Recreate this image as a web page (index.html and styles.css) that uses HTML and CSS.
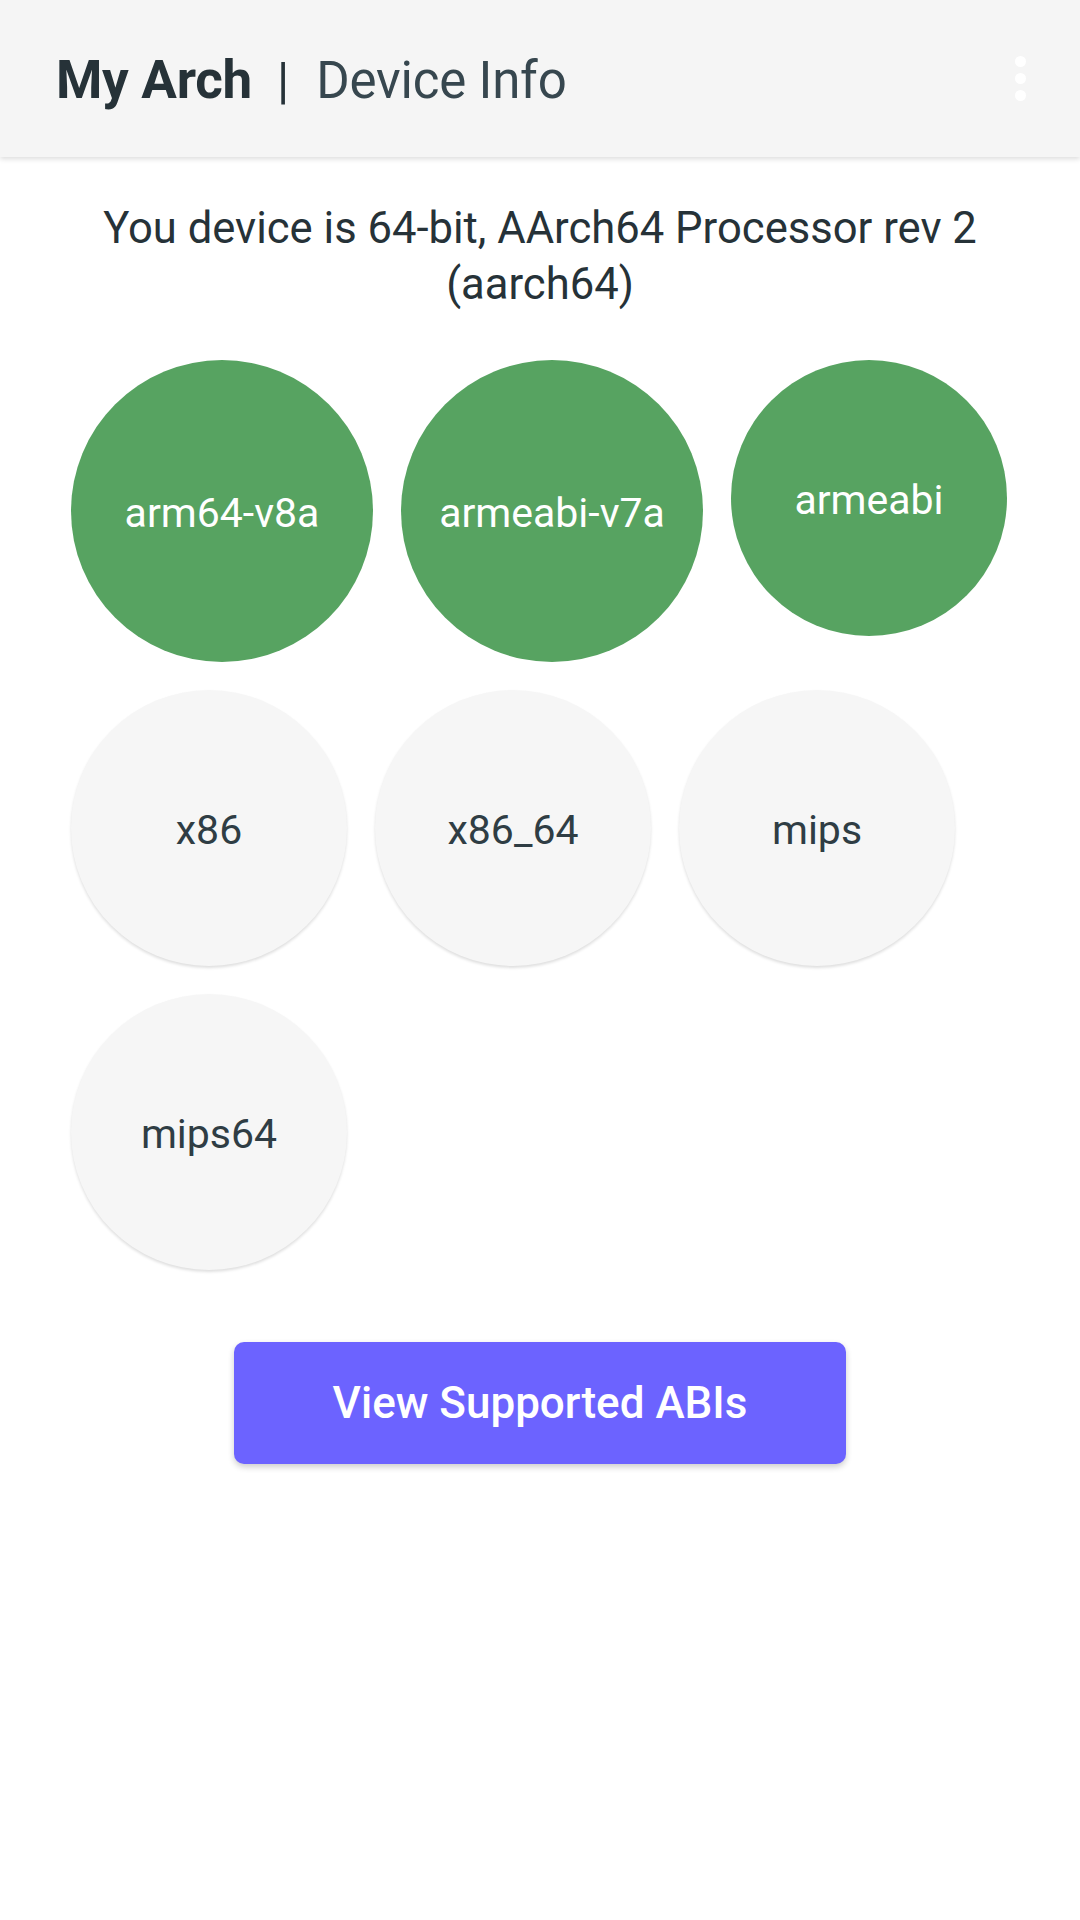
FILE: index.html
```html
<!DOCTYPE html>
<html lang="en">
<head>
<meta charset="utf-8">
<title>My Arch | Device Info</title>
<link rel="stylesheet" href="styles.css">
</head>
<body>
<header class="appbar">
  <div class="title">
    <span class="brand">My Arch</span>
    <span class="sep">|</span>
    <span class="page">Device Info</span>
  </div>
  <div class="menu" aria-label="More options">
    <span class="dot"></span><span class="dot"></span><span class="dot"></span>
  </div>
</header>
<main class="content">
  <p class="info">You device is 64-bit, AArch64 Processor rev 2<br>(aarch64)</p>
  <div class="abis">
    <div class="abi on big">arm64-v8a</div>
    <div class="abi on big">armeabi-v7a</div>
    <div class="abi on">armeabi</div>
    <div class="abi off">x86</div>
    <div class="abi off">x86_64</div>
    <div class="abi off">mips</div>
    <div class="abi off">mips64</div>
  </div>
  <div class="actions">
    <button class="btn">View Supported ABIs</button>
  </div>
</main>
</body>
</html>
```
FILE: styles.css
```css
* { box-sizing: border-box; }
html, body { margin: 0; padding: 0; }
body {
  width: 1080px;
  height: 1920px;
  background: #ffffff;
  font-family: Roboto, "Noto Sans", sans-serif;
  color: #263238;
  overflow: hidden;
}
.appbar {
  height: 157px;
  background: #f5f5f5;
  box-shadow: 0 2px 5px rgba(0,0,0,0.14);
  display: flex;
  align-items: center;
  justify-content: space-between;
  padding: 0 54px 0 56px;
  position: relative;
  z-index: 1;
}
.title {
  display: flex;
  align-items: baseline;
  line-height: 1;
  margin-top: 4px;
}
.brand { font-size: 53px; font-weight: 700; color: #263238; letter-spacing: -0.3px; }
.sep { font-size: 50px; margin: 0 27px 0 25px; color: #263238; font-weight: 400; }
.page { font-size: 51px; font-weight: 400; color: #37474f; letter-spacing: -0.2px; }
.menu {
  display: flex;
  flex-direction: column;
  gap: 6px;
  margin-top: -1px;
}
.dot {
  width: 11px;
  height: 11px;
  border-radius: 50%;
  background: #ffffff;
}
.content {
  padding: 44px 0 0;
}
.info {
  margin: 0 auto;
  text-align: center;
  font-size: 43.6px;
  line-height: 56px;
  color: #263238;
}
.abis {
  display: flex;
  flex-wrap: wrap;
  gap: 28px;
  align-items: flex-start;
  padding: 0 71px;
  margin-top: 47px;
}
.abi {
  width: 276px;
  height: 276px;
  border-radius: 50%;
  display: flex;
  align-items: center;
  justify-content: center;
  font-size: 41px;
  padding-top: 3px;
}
.abi.big { width: 302px; height: 302px; }
.abi.on { background: #57a361; color: #ffffff; }
.abi.off {
  background: #f6f6f6;
  color: #2f3d44;
  box-shadow: 0 2px 3px rgba(0,0,0,0.13);
}
.actions {
  display: flex;
  justify-content: center;
  margin-top: 72px;
}
.btn {
  width: 612px;
  height: 122px;
  border: none;
  border-radius: 10px;
  background: #6c63ff;
  color: #ffffff;
  font-family: Roboto, "Noto Sans", sans-serif;
  font-size: 44px;
  font-weight: 500;
  box-shadow: 0 3px 6px rgba(0,0,0,0.2);
}
```
